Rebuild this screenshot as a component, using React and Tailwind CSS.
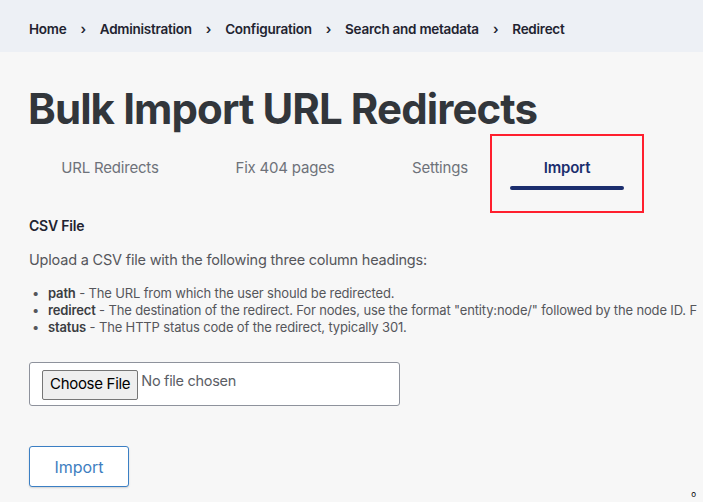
import React from "react";

export default function App() {
  return (
    <div className="w-[703px] h-[502px] overflow-hidden bg-[#f7f7f7] relative font-['Inter','Noto_Sans',sans-serif]">
      <nav className="h-[52px] bg-[#edf0f5] flex items-center pt-[6px] pl-[29px] text-[13.5px] font-semibold text-[#222330] tracking-[-0.25px] whitespace-nowrap">
        <span>Home</span>
        <span className="px-[14px]">›</span>
        <span>Administration</span>
        <span className="px-[14px]">›</span>
        <span>Configuration</span>
        <span className="px-[14px]">›</span>
        <span>Search and metadata</span>
        <span className="px-[14px]">›</span>
        <span>Redirect</span>
      </nav>
      <h1 className="pl-[28px] mt-[33px] text-[42px] leading-[48px] font-bold text-[#32363b] tracking-[-0.9px] whitespace-nowrap">
        Bulk Import URL Redirects
      </h1>
      <div className="flex items-stretch pl-[29px] mt-[1px] h-[79px] text-[15px] text-[#6e727a] tracking-[-0.2px] whitespace-nowrap">
        <div className="w-[162px] flex items-center justify-center pb-[11px]">URL Redirects</div>
        <div className="w-[188px] flex items-center justify-center pb-[11px]">Fix 404 pages</div>
        <div className="w-[111px] flex items-center justify-center pb-[11px] pl-[11px]">Settings</div>
        <div className="w-[154px] border-2 border-[#ff1f2e] flex flex-col items-center pt-[22px]">
          <span className="font-semibold text-[#1b2e6e] leading-[20px]">Import</span>
          <span className="mt-[8px] w-[114px] h-[4px] rounded-full bg-[#1b2e6e]"></span>
        </div>
      </div>
      <div className="pl-[29px] mt-[3px] text-[#222330]">
        <div className="text-[14px] font-semibold tracking-[-0.2px] leading-[20px]">CSV File</div>
        <p className="mt-[14px] text-[14.5px] text-[#55565b] tracking-[-0.2px] leading-[20px] whitespace-nowrap">
          Upload a CSV file with the following three column headings:
        </p>
        <ul className="mt-[15px] text-[13px] text-[#55565b] leading-[17px] tracking-[-0.15px] whitespace-nowrap">
          <li className="flex items-start h-[17px]">
            <span className="w-[19px] shrink-0 pl-[3px]">•</span>
            <span><b className="font-semibold text-[#3b3d42]">path</b> - The URL from which the user should be redirected.</span>
          </li>
          <li className="flex items-start h-[17px]">
            <span className="w-[19px] shrink-0 pl-[3px]">•</span>
            <span><b className="font-semibold text-[#3b3d42]">redirect</b> - The destination of the redirect. For nodes, use the format "entity:node/" followed by the node ID. F</span>
          </li>
          <li className="flex items-start h-[17px]">
            <span className="w-[19px] shrink-0 pl-[3px]">•</span>
            <span><b className="font-semibold text-[#3b3d42]">status</b> - The HTTP status code of the redirect, typically 301.</span>
          </li>
        </ul>
        <div className="mt-[26px] w-[371px] h-[44px] bg-white border border-[#8e929c] rounded-[3px] flex items-center pl-[12px]">
          <span className="h-[30px] px-[7px] flex items-center bg-[#efefef] border border-[#767676] rounded-[2px] text-[15px] text-black tracking-[-0.3px] mt-[1px] whitespace-nowrap">
            Choose File
          </span>
          <span className="ml-[3px] text-[14.5px] text-[#5b5e66] tracking-[-0.3px] -mt-[6px] whitespace-nowrap">No file chosen</span>
        </div>
        <button className="mt-[40px] w-[100px] h-[41px] bg-white border border-[#3b7fc4] rounded-[3px] text-[16px] text-[#3e7ec0] shadow-[0_1px_2px_rgba(0,0,0,0.15)]">
          Import
        </button>
      </div>
      <span className="absolute right-[7px] bottom-[2px] text-[8px] text-black">o</span>
    </div>
  );
}
